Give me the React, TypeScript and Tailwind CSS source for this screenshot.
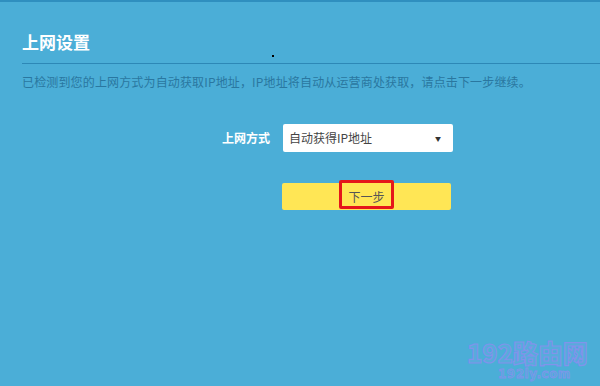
import React from "react";

export default function App() {
  const font = { fontFamily: '"Noto Sans CJK SC", "Microsoft YaHei", sans-serif' };
  return (
    <div className="relative w-[600px] h-[386px] bg-[#4baed7] overflow-hidden border-t-2 border-[#2f8fbf]" style={font}>
      <div className="pl-[22px] pt-[28px]">
        <h1 className="text-[17px] leading-[24px] font-bold text-white">上网设置</h1>
        <div className="mt-[9px] h-px bg-[#2d88b6]" />
        <p className="mt-[9px] text-[12px] leading-[18px] text-[#2a77a0] tracking-[0.15px]">
          已检测到您的上网方式为自动获取IP地址，IP地址将自动从运营商处获取，请点击下一步继续。
        </p>
      </div>

      <div className="mt-[33px] flex items-center">
        <div className="w-[283px] pr-[13px] text-right text-[12px] font-bold text-white">上网方式</div>
        <div className="w-[170px] h-[28px] bg-white rounded-[2px] flex items-center justify-between pl-[6px] pr-[12px]">
          <span className="text-[12px] text-[#444]">自动获得IP地址</span>
          <span className="text-[6px] text-[#333]">▼</span>
        </div>
      </div>

      <div className="mt-[31px] pl-[282px]">
        <div className="relative w-[169px] h-[27px] bg-[#ffe655] rounded-[2px] flex items-center justify-center">
          <span className="text-[12px] text-[#555]">下一步</span>
          <div className="absolute left-[57px] top-[-3px] w-[55px] h-[29px] border-[3px] border-[#e5161a] rounded-[2px]" />
        </div>
      </div>

      <div className="absolute left-[272px] top-[53px] w-[2px] h-[2px] bg-black" />

      <div className="absolute left-[467px] top-[338px] text-[25px] leading-[24px] font-black text-[#5aabdc] [-webkit-text-stroke:1.2px_#8791ee] opacity-90 whitespace-nowrap">
        192路由网
      </div>
      <div className="absolute left-[498px] top-[366px] text-[12px] leading-[12px] font-black text-[#5aabdc] [-webkit-text-stroke:0.8px_#8791ee] opacity-90 tracking-[0.5px] whitespace-nowrap" style={{ fontFamily: '"DejaVu Sans", sans-serif' }}>
        192ly.com
      </div>
    </div>
  );
}
